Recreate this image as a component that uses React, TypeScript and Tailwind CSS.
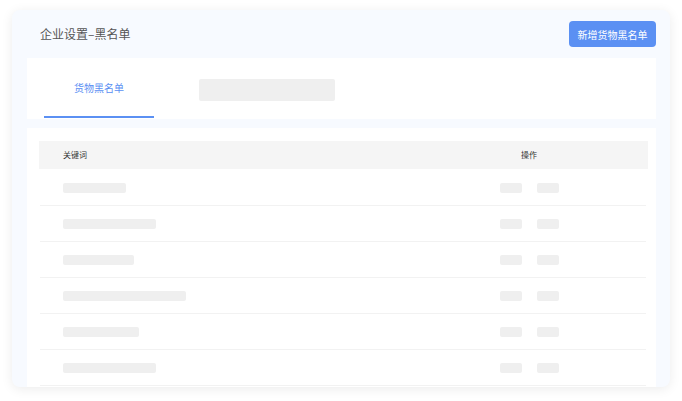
import React from "react";

const rows = [63, 93, 71, 123, 76, 93];

export default function App() {
  return (
    <div
      className="w-[682px] h-[401px] bg-white pt-[10px] px-3"
      style={{ fontFamily: '"Noto Sans CJK SC", "Noto Sans", sans-serif' }}
    >
      <div className="h-[377px] rounded-lg bg-[#f7faff] shadow-[0_2px_12px_rgba(0,0,0,0.08)] overflow-hidden flex flex-col">
        {/* header */}
        <div className="h-[48px] flex items-center justify-between pl-[28px] pr-[14px] shrink-0">
          <span className="text-[12px] text-[#555]">企业设置–黑名单</span>
          <button className="h-[26px] w-[87px] rounded bg-[#5b90f3] text-white text-[10px]">
            新增货物黑名单
          </button>
        </div>

        {/* tabs */}
        <div className="ml-[15px] mr-[14px] h-[61px] bg-white flex items-stretch shrink-0">
          <div className="ml-[17px] w-[110px] flex flex-col">
            <div className="flex-1 flex items-center justify-center text-[10px] text-[#5b90f3]">
              货物黑名单
            </div>
            <div className="h-[2px] bg-[#5b90f3] mb-[1px]" />
          </div>
          <div className="ml-[45px] mt-[21px] w-[136px] h-[22px] bg-[#efefef] rounded-[2px]" />
        </div>

        {/* table */}
        <div className="ml-[15px] mr-[14px] mt-[9px] flex-1 bg-white pt-[13px] pl-3 pr-2">
          <div className="h-[28px] bg-[#f5f5f5] flex items-center text-[8px] text-[#333]">
            <div className="flex-1 pl-6">关键词</div>
            <div className="w-[158px] mr-[40px] flex justify-center">操作</div>
          </div>
          <div className="pt-px">
            {rows.map((w, i) => (
              <div
                key={i}
                className="h-[36px] ml-px mr-[2px] border-b border-[#f2f2f2] flex items-center"
              >
                <div className="flex-1 pl-[23px]">
                  <div className="h-[10px] bg-[#efefef] rounded-[2px]" style={{ width: w }} />
                </div>
                <div className="w-[158px] mr-[38px] flex justify-center gap-[15px]">
                  <div className="w-[22px] h-[10px] bg-[#efefef] rounded-[2px]" />
                  <div className="w-[22px] h-[10px] bg-[#efefef] rounded-[2px]" />
                </div>
              </div>
            ))}
          </div>
        </div>
      </div>
    </div>
  );
}
